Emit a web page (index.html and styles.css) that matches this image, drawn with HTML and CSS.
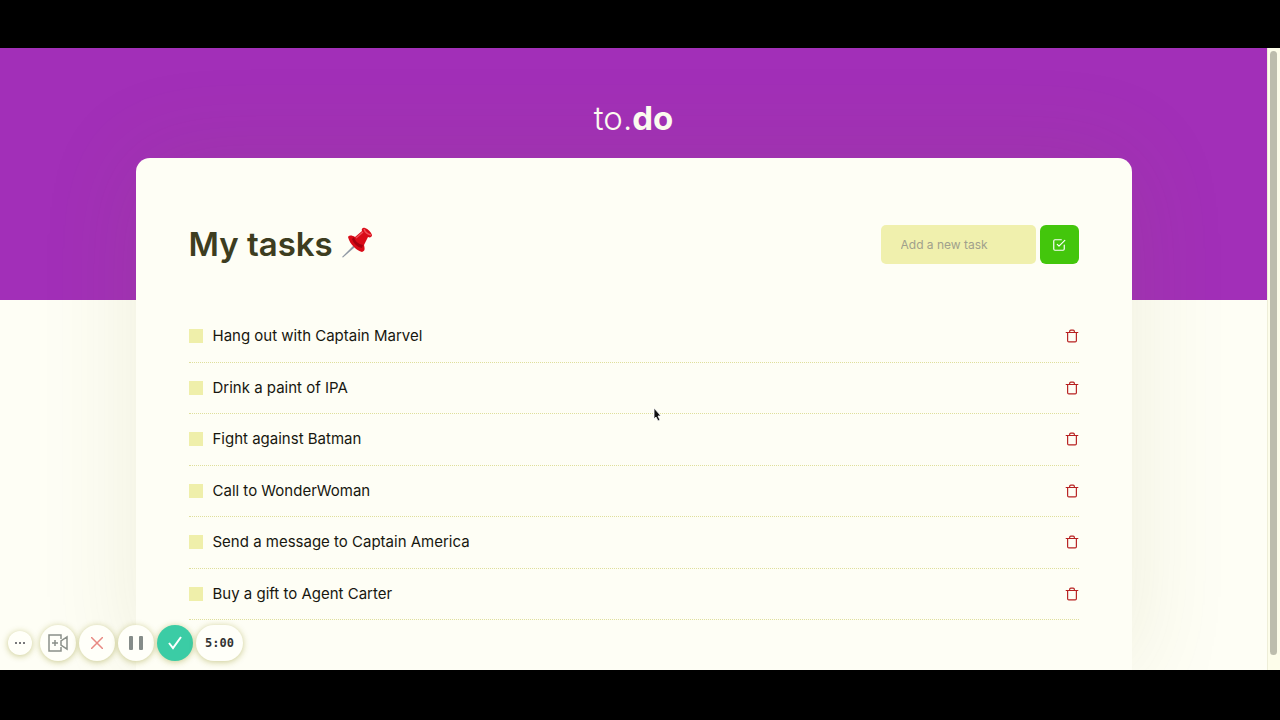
FILE: index.html
```html
<!DOCTYPE html>
<html lang="en">
<head>
<meta charset="utf-8">
<meta name="viewport" content="width=device-width, initial-scale=1">
<title>to.do</title>
<link rel="stylesheet" href="styles.css">
</head>
<body>
<svg class="sprite" aria-hidden="true">
  <symbol id="trash" viewBox="0 0 24 24"><path d="M2 6h20M19.500 6v14a2 2 0 0 1-2 2h-11a2 2 0 0 1-2-2V6M8 6V4a2 2 0 0 1 2-2h4a2 2 0 0 1 2 2v2"/></symbol>
</svg>
<div class="screen">
  <div class="page">
    <header class="header"><h1 class="logo">to.<span class="logo-bold">do</span></h1></header>
    <main class="card">
      <div class="card-head">
        <h2 class="title">My tasks
          <svg class="pin" viewBox="0 0 32 32" role="img" aria-label="pushpin">
            <path d="M13 18 1 30l1 .5L14 20z" fill="#8f98a4"/>
            <path d="M7 10c1-2 4-2 7 0l7-6c-1-2 1-4 3-3 3 1 6 4 7 7 0 2-2 3-4 2l-4 8c1 4 1 6-2 7-3-1-5-2-8-5-3-3-5-6-6-10z" fill="#d90b17"/>
            <path d="M13 10c1 4 4 7 9 8l-1 3c-5-1-8-4-10-9z" fill="#a5000e"/>
            <path d="M23 2c1 3 3 5 7 6M15 11l7-6" stroke="#f05058" stroke-width="1.500" fill="none"/>
          </svg>
        </h2>
        <form class="add">
          <input class="add-input" type="text" placeholder="Add a new task" aria-label="Add a new task">
          <button class="add-button" type="button" aria-label="Add task">
            <svg class="icon" viewBox="0 0 24 24"><path d="M9 11l3 3L22 4M21 12v7a2 2 0 0 1-2 2H5a2 2 0 0 1-2-2V5a2 2 0 0 1 2-2h11"/></svg>
          </button>
        </form>
      </div>
      <ul class="tasks">
        <li class="task"><label class="task-label"><input class="check" type="checkbox">Hang out with Captain Marvel</label><button class="remove" type="button" aria-label="Remove"><svg class="icon"><use href="#trash"/></svg></button></li>
        <li class="task"><label class="task-label"><input class="check" type="checkbox">Drink a paint of IPA</label><button class="remove" type="button" aria-label="Remove"><svg class="icon"><use href="#trash"/></svg></button></li>
        <li class="task"><label class="task-label"><input class="check" type="checkbox">Fight against Batman</label><button class="remove" type="button" aria-label="Remove"><svg class="icon"><use href="#trash"/></svg></button></li>
        <li class="task"><label class="task-label"><input class="check" type="checkbox">Call to WonderWoman</label><button class="remove" type="button" aria-label="Remove"><svg class="icon"><use href="#trash"/></svg></button></li>
        <li class="task"><label class="task-label"><input class="check" type="checkbox">Send a message to Captain America</label><button class="remove" type="button" aria-label="Remove"><svg class="icon"><use href="#trash"/></svg></button></li>
        <li class="task"><label class="task-label"><input class="check" type="checkbox">Buy a gift to Agent Carter</label><button class="remove" type="button" aria-label="Remove"><svg class="icon"><use href="#trash"/></svg></button></li>
      </ul>
    </main>
  </div>
  <div class="scrollbar"><div class="thumb"></div></div>
  <div class="recorder">
    <button class="round small" type="button" aria-label="More"><svg width="12" height="12" viewBox="0 0 12 12" fill="#4b4b50"><circle cx="2" cy="6" r="1"/><circle cx="6" cy="6" r="1"/><circle cx="10" cy="6" r="1"/></svg></button>
    <button class="round" type="button" aria-label="Camera"><svg width="20" height="20" viewBox="0 0 20 20" fill="none" stroke="#8b9089" stroke-width="1.500"><path d="M13 6V2H1v16h12v-4M13 8v4l6 4V4zM7 7v6M4 10h6"/></svg></button>
    <button class="round" type="button" aria-label="Cancel"><svg width="12" height="12" viewBox="0 0 12 12" stroke="#e88983" stroke-width="1.500"><path d="M0 0l12 12M12 0 0 12"/></svg></button>
    <button class="round" type="button" aria-label="Pause"><svg width="14" height="14" viewBox="0 0 14 14" fill="#858c89"><rect width="4" height="14" rx="1"/><rect x="10" width="4" height="14" rx="1"/></svg></button>
    <button class="round done" type="button" aria-label="Finish"><svg width="16" height="16" viewBox="0 0 16 16" fill="none" stroke="#fff" stroke-width="2"><path d="M2 8l4 5L14 2"/></svg></button>
    <span class="timer">5:00</span>
  </div>
  <svg class="cursor" viewBox="0 0 10 15" aria-hidden="true"><path d="M1 1v11l2-2 2 4 2-1-2-4h3z" fill="#111" stroke="#fff" stroke-width=".8"/></svg>
</div>
</body>
</html>
```
FILE: styles.css
```css
* { box-sizing: border-box; }
body {
  margin: 0;
  min-height: 100vh;
  padding: 48px 0 50px;
  display: flex;
  background: #000;
  color: #17170f;
  font-family: Inter, "Open Sans", sans-serif;
}
button, input { font: inherit; }
button { border: 0; padding: 0; cursor: pointer; }
.sprite { position: absolute; width: 0; height: 0; }
.screen {
  flex: 1;
  position: relative;
  display: flex;
  overflow: hidden;
  background: #fefef5;
}
.page { flex: 1; display: flex; flex-direction: column; overflow: hidden; }
.header {
  height: 252px;
  flex: none;
  padding-top: 46px;
  background: #a22fb8;
  text-align: center;
}
.logo { margin: 0; color: #fffff5; font-size: 33px; line-height: 48px; font-weight: 300; }
.logo-bold { font-weight: 700; }
.card {
  flex: 1;
  width: calc(100% - 271px);
  max-width: 996px;
  margin: -142px auto 0;
  padding: 67px 53px 0;
  border-radius: 14px 14px 0 0;
  background: #fefef5;
  box-shadow: 0 0 100px rgba(120, 120, 40, .12);
}
.card-head { display: flex; align-items: center; justify-content: space-between; }
.title {
  display: flex;
  align-items: center;
  gap: 8px;
  margin: 0;
  color: #3d3d20;
  font-size: 33px;
  line-height: 39px;
  font-weight: 600;
}
.pin { width: 32px; height: 32px; margin-bottom: 4px; }
.add { display: flex; gap: 4px; }
.add-input {
  width: 155px;
  height: 39px;
  padding: 0 20px;
  border: 0;
  border-radius: 5px;
  background: #f0f0ad;
  font-size: 12px;
}
.add-input::placeholder { color: #a0a08c; opacity: 1; }
.add-button {
  display: grid;
  place-items: center;
  width: 39px;
  height: 39px;
  border-radius: 6px;
  background: #43c60c;
  color: #fff;
}
.icon {
  width: 14px;
  height: 14px;
  fill: none;
  stroke: currentColor;
  stroke-width: 2;
  stroke-linecap: round;
  stroke-linejoin: round;
}
.tasks {
  display: flex;
  flex-direction: column;
  min-height: 309px;
  margin: 47px 0 0;
  padding: 0;
  list-style: none;
}
.task {
  flex: 1;
  display: flex;
  align-items: center;
  justify-content: space-between;
  border-bottom: 1px dotted #dfdf9c;
}
.task-label { display: flex; align-items: center; gap: 10px; font-size: 15px; line-height: 24px; }
.check { appearance: none; width: 14px; height: 14px; margin: 0; background: #efefaa; }
.remove { display: grid; background: none; color: #b72020; }
.scrollbar { width: 13px; padding: 3px 3px 15px 2px; border-left: 1px solid #eeeed8; background: #fdfdea; }
.thumb { height: 100%; border-radius: 4px; background: #bdbdad; }
.recorder {
  position: absolute;
  left: 8px;
  bottom: 9px;
  display: flex;
  align-items: center;
  gap: 3px;
}
.round, .timer {
  display: grid;
  place-items: center;
  width: 36px;
  height: 36px;
  border-radius: 18px;
  background: #fffff9;
  box-shadow: 0 1px 6px rgba(140, 140, 20, .45);
}
.small { width: 24px; height: 24px; margin-right: 5px; }
.done { background: #3bcca5; }
.timer { width: 47px; color: #333; font-family: "DejaVu Sans Mono", monospace; font-size: 12px; font-weight: 700; }
.cursor { position: absolute; left: 51%; top: 359px; width: 10px; height: 15px; }
```
